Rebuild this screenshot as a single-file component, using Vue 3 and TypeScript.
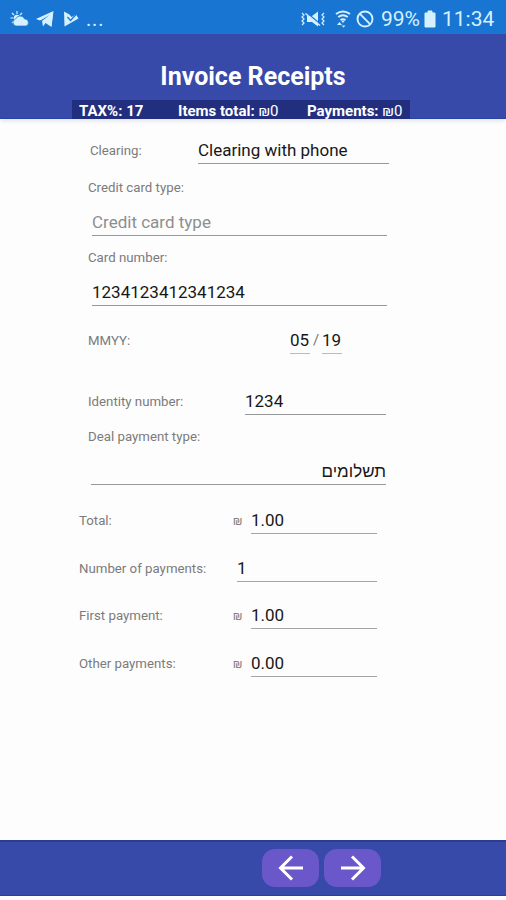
<script setup lang="ts">
interface PaymentRow {
  label: string
  value: string
  currency: boolean
  gap: string
}

const payments: PaymentRow[] = [
  { label: 'Total:', value: '1.00', currency: true, gap: 'gap-25' },
  { label: 'Number of payments:', value: '1', currency: false, gap: 'gap-24' },
  { label: 'First payment:', value: '1.00', currency: true, gap: 'gap-23' },
  { label: 'Other payments:', value: '0.00', currency: true, gap: 'gap-24' },
]
</script>

<template>
  <div class="screen">
    <div class="status">
      <svg class="weather" viewBox="0 0 20 18">
        <path d="M7 1v3M2 3l2 2M0.5 8h3M2 13l2-2M12 3l-2 2" stroke="currentColor" stroke-width="1.2" />
        <circle cx="7" cy="8" r="3.2" fill="currentColor" />
        <path d="M6 16a3.5 3.5 0 0 1-.6-6.8A5 5 0 0 1 14.6 9 3.6 3.6 0 0 1 16 16z" fill="currentColor" stroke="#1876d2" stroke-width=".7" />
      </svg>
      <svg class="telegram" viewBox="0 0 20 18">
        <path d="M1 9 18.5 1 16.500 17l-6-4-2.500 3.500-1-5.500L15 4.500 5 10.500z" fill="currentColor" />
        <path d="M2 9 18 2l-1.500 14-7-4.500L15 4.500 6 10z" fill="currentColor" />
      </svg>
      <svg class="play" viewBox="0 0 16 18">
        <path d="M1 1.500 6.500 4.500 8.500 7 13 4.500 15.500 8.500 1.500 16.500z" fill="currentColor" />
        <path d="m4.500 7 3 3.500 5.500-6" fill="none" stroke="#1876d2" stroke-width="1.200" />
      </svg>
      <span class="dots">...</span>
      <svg class="mute" viewBox="0 0 26 18">
        <path d="M2 3l2 2-2 2 2 2-2 2 2 2-2 2M24 3l-2 2 2 2-2 2 2 2-2 2 2 2" fill="none" stroke="currentColor" stroke-width="1.200" />
        <path d="M7 6h5l6-4.500v15L12 12H7z" fill="currentColor" />
        <path d="M7 3 21 14.500" stroke="#1876d2" stroke-width="1.300" />
        <path d="M5.500 3.500 20 15.500" stroke="currentColor" stroke-width="1.500" />
      </svg>
      <svg class="wifi" viewBox="0 0 16 18">
        <path d="M1 4q7-5 14 0M3.200 7q4.800-3.500 9.600 0M5.500 10q2.500-1.800 5 0" fill="none" stroke="currentColor" stroke-width="1.900" />
        <path d="m6 10.500 2 2.500 2-2.500zM4.500 12l2.500 3H2zM8.500 17.500l-2-2h4z" fill="currentColor" />
      </svg>
      <svg class="blocked" viewBox="0 0 18 18">
        <circle cx="9" cy="9" r="7.500" fill="none" stroke="currentColor" stroke-width="1.900" />
        <path d="m3.700 3.700 10.600 10.600" stroke="currentColor" stroke-width="1.900" />
      </svg>
      <span class="percent">99%</span>
      <svg class="battery" viewBox="0 0 12 18">
        <path d="M4 1h4v2h3v14H1V3h3z" fill="currentColor" stroke="currentColor" stroke-linejoin="round" />
      </svg>
      <span class="clock">11:34</span>
    </div>

    <header class="header">
      <h1 class="title">Invoice Receipts</h1>
      <div class="summary">
        <span class="tax">TAX%: 17</span>
        <span class="items">Items total: <span class="money"><span class="shekel">₪</span>0</span></span>
        <span class="paid">Payments: <span class="money"><span class="shekel">₪</span>0</span></span>
      </div>
    </header>

    <main class="form">
      <div class="row clearing">
        <span class="label">Clearing:</span>
        <span class="field clearing-field">Clearing with phone</span>
      </div>
      <div class="label card-type">Credit card type:</div>
      <div class="field wide placeholder"><span>Credit card type</span></div>
      <div class="label gap-14">Card number:</div>
      <div class="field wide">1234123412341234</div>
      <div class="row gap-24">
        <span class="label date-label">MMYY:</span>
        <span class="field date">05</span>
        <span class="slash">/</span>
        <span class="field date">19</span>
      </div>
      <div class="row identity">
        <span class="label">Identity number:</span>
        <span class="field identity-field">1234</span>
      </div>
      <div class="label gap-14">Deal payment type:</div>
      <div class="field wide hebrew" dir="rtl">תשלומים</div>
      <div v-for="row in payments" :key="row.label" class="row payment" :class="row.gap">
        <span class="label">{{ row.label }}</span>
        <span v-if="row.currency" class="currency">₪</span>
        <span class="field amount" :class="{ count: !row.currency }">{{ row.value }}</span>
      </div>
    </main>

    <footer class="footer">
      <button class="nav" aria-label="Back">
        <svg viewBox="0 0 26 26"><path d="M25 13H2.500M14 1.500 2.500 13 14 24.500" /></svg>
      </button>
      <button class="nav" aria-label="Next">
        <svg viewBox="0 0 26 26"><path d="M1 13h22.500M12 1.500 23.500 13 12 24.500" /></svg>
      </button>
    </footer>
  </div>
</template>

<style>
body {
  margin: 0;
  background: #fdfdfd;
}
</style>

<style scoped>
.screen {
  display: flex;
  flex-direction: column;
  width: 506px;
  height: 900px;
  overflow: hidden;
  background: #fdfdfd;
  font-family: Roboto, "Liberation Sans", sans-serif;
  color: #171717;
}
.status {
  display: flex;
  align-items: center;
  box-sizing: border-box;
  height: 34px;
  flex: none;
  padding: 3px 0 0 10px;
  background: #1876d2;
  color: #d5f0ff;
  white-space: nowrap;
}
.status svg {
  height: 18px;
  flex: none;
}
.weather { width: 20px; }
.telegram { width: 20px; margin-left: 5px; }
.play { width: 16px; margin-left: 8px; }
.dots { width: 18px; margin-left: 7px; font-size: 20px; letter-spacing: 0.8px; }
.mute { width: 26px; margin-left: 196px; }
.wifi { width: 16px; margin-left: 9px; }
.blocked { width: 18px; margin-left: 5px; }
.percent { width: 39px; margin-left: 7px; font-size: 21px; }
.battery { width: 12px; margin-left: 4px; }
.clock { margin-left: 6px; font-size: 21px; }

.header {
  display: flex;
  flex-direction: column;
  height: 85px;
  flex: none;
  box-sizing: border-box;
  background: #374aaa;
  border-bottom: 1px solid #2445a6;
  box-shadow: 0 3px 4px -1px #dfe3ea;
  color: #fff;
}
.title {
  margin: 28px 0 0;
  height: 30px;
  line-height: 30px;
  font-size: 25px;
  font-weight: 700;
  text-align: center;
}
.summary {
  display: flex;
  box-sizing: border-box;
  width: 338px;
  height: 19px;
  margin: 8px 0 0 72px;
  padding-left: 7px;
  background: #222f7f;
  font-size: 15px;
  font-weight: 700;
  line-height: 23px;
  white-space: nowrap;
}
.tax { width: 99px; }
.items { width: 129px; }
.money { font-weight: 400; }
.shekel { font-size: 15px; }

.form {
  display: flex;
  flex-direction: column;
  flex: 1;
  padding-left: 88px;
  white-space: nowrap;
}
.row {
  display: flex;
  height: 24px;
}
.label {
  height: 16px;
  line-height: 16px;
  font-size: 13.25px;
  color: #7b7b7b;
}
.row .label { margin-top: 3px; }
.field {
  box-sizing: border-box;
  height: 24px;
  border-bottom: 1px solid #989898;
  font-size: 17px;
  line-height: 21px;
}
.clearing { margin-top: 21px; padding-left: 2px; }
.clearing .label { width: 108px; }
.clearing-field { width: 191px; }
.card-type { margin-top: 16px; }
.wide {
  width: 295px;
  margin: 16px 0 0 4px;
}
.placeholder { color: #8e8e8e; }
.date-label { width: 202px; }
.date { width: 20px; border-color: #bbb; }
.slash { width: 12px; text-align: center; font-size: 15px; line-height: 21px; color: #777; }
.identity { margin-top: 37px; }
.identity .label { width: 157px; }
.identity-field { width: 141px; }
.hebrew { margin-left: 3px; font-family: "Liberation Sans", sans-serif; }
.payment { margin-left: -9px; width: 298px; }
.payment .label { width: 154px; }
.currency {
  width: 18px;
  font-size: 12px;
  line-height: 23px;
  color: #808080;
}
.amount { flex: 1; border-color: #a5a5a5; }
.count { margin-left: 4px; }
.gap-14 { margin-top: 14px; }
.gap-23 { margin-top: 23px; }
.gap-24 { margin-top: 24px; }
.gap-25 { margin-top: 25px; }

.footer {
  display: flex;
  gap: 5px;
  box-sizing: border-box;
  height: 56px;
  flex: none;
  margin-bottom: 4px;
  padding: 7px 0 0 262px;
  background: #374aaa;
  border-top: 2px solid #2c3c95;
  border-bottom: 1px solid #2c3f9b;
}
.nav {
  display: flex;
  align-items: center;
  justify-content: center;
  width: 57px;
  height: 38px;
  padding: 0;
  border: 0;
  border-radius: 13px;
  background: #6a57ca;
}
.nav svg {
  width: 26px;
  height: 26px;
  fill: none;
  stroke: #fff;
  stroke-width: 3;
}
</style>
